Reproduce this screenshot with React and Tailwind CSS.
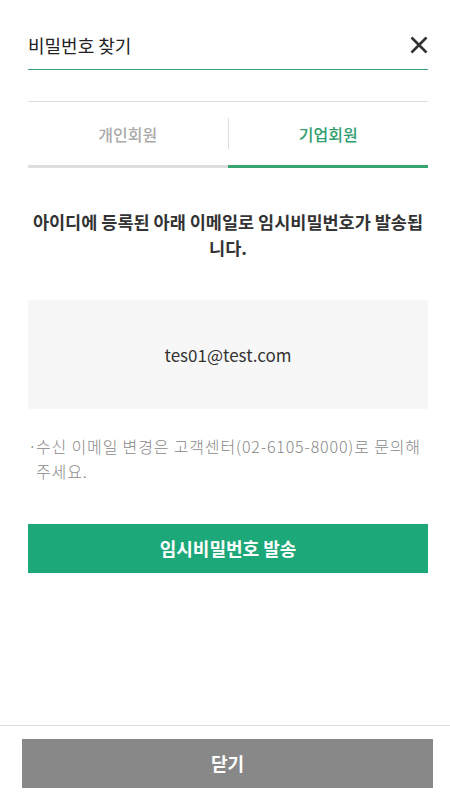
const font = { fontFamily: '"Noto Sans CJK KR", "Noto Sans", sans-serif' };

export default function App() {
  return (
    <div className="h-[800px] flex flex-col bg-white overflow-hidden" style={font}>
      <div className="flex-1 pl-7 pr-[22px]">
        {/* Header */}
        <div className="flex items-center justify-between pt-[33px] pb-[12px] border-b border-[#3aa36f]">
          <h1 className="text-[18px] leading-[24px] text-[#222] font-normal">비밀번호 찾기</h1>
          <button className="w-[18px] h-[18px] flex items-center justify-center">
            <svg width="18" height="18" viewBox="0 0 18 18">
              <path d="M1.5 1.5 L16.5 16.5 M16.5 1.5 L1.5 16.5" stroke="#333" strokeWidth="2.6" />
            </svg>
          </button>
        </div>

        {/* Tabs */}
        <div className="mt-[31px] border-t border-[#dddddd]">
          <div className="flex h-[63px]">
            <div className="flex-1 flex items-center justify-center text-[16px] font-medium text-[#aaaaaa]">
              개인회원
            </div>
            <div className="w-px h-[31px] self-center bg-[#dddddd]" />
            <div className="flex-1 flex items-center justify-center text-[16px] font-medium text-[#2e9e6e]">
              기업회원
            </div>
          </div>
          <div className="flex h-[3px]">
            <div className="flex-1 bg-[#dddddd]" />
            <div className="flex-1 bg-[#36a372]" />
          </div>
        </div>

        {/* Message */}
        <p className="mt-[41px] text-center text-[17.5px] leading-[26px] font-bold text-[#333]">
          아이디에 등록된 아래 이메일로 임시비밀번호가 발송됩니다.
        </p>

        {/* Email box */}
        <div className="mt-[39px] h-[109px] bg-[#f7f7f7] flex items-center justify-center text-[17px] text-[#333]">
          tes01@test.com
        </div>

        {/* Note */}
        <div className="mt-[25px] flex text-[16px] leading-[25px] tracking-[0.85px] text-[#888] font-light">
          <span className="w-[8px] shrink-0 tracking-normal">·</span>
          <p>수신 이메일 변경은 고객센터(02-6105-8000)로 문의해 주세요.</p>
        </div>

        {/* Send button */}
        <button className="mt-[40px] w-full h-[49px] bg-[#1ca878] text-white text-[18px] font-bold">
          임시비밀번호 발송
        </button>
      </div>

      {/* Footer */}
      <div className="border-t border-[#dddddd] pl-[22px] pr-[17px] pt-[13px] pb-[12px]">
        <button className="w-full h-[49px] bg-[#888888] text-white text-[18px] font-bold">
          닫기
        </button>
      </div>
    </div>
  );
}
